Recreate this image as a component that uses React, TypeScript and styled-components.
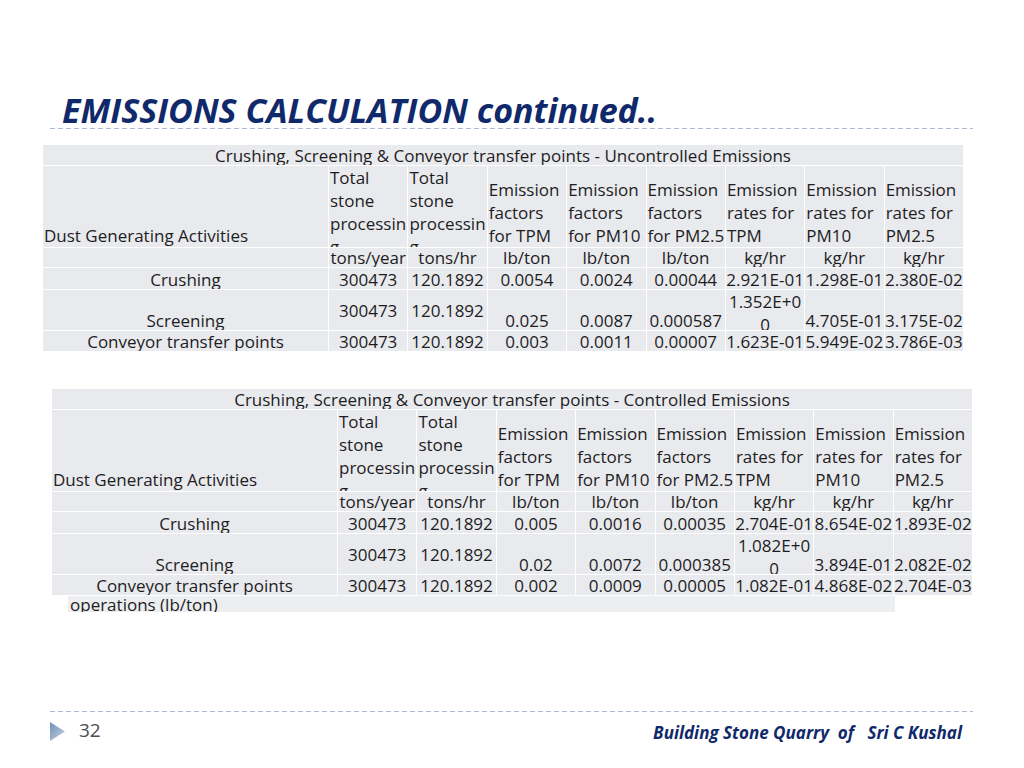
import React from "react";
import styled, { createGlobalStyle } from "styled-components";

const Global = createGlobalStyle`
  html, body { margin: 0; padding: 0; background: #ffffff; }
  body { font-family: "Open Sans", "Noto Sans", sans-serif; }
`;

const Slide = styled.div`
  width: 1024px;
  height: 768px;
  display: flex;
  flex-direction: column;
  overflow: hidden;
  background: #ffffff;
`;

const TitleBar = styled.header`
  margin: 0 51px 0 50px;
  padding: 92px 0 0 12px;
`;

const Title = styled.h1`
  margin: 0;
  font-family: "Open Sans", "Noto Sans", sans-serif;
  font-style: italic;
  font-weight: 700;
  font-size: 34px;
  line-height: 36px;
  color: #10296b;
  white-space: nowrap;
`;

const Rule = styled.div`
  height: 1px;
  background: repeating-linear-gradient(to right, #aebdd0 0 5px, transparent 5px 8px);
`;

const TitleRule = styled(Rule)`
  margin: 0 51px 0 50px;
`;

const Table = styled.div<{ $left: number; $top: number }>`
  display: grid;
  grid-template-columns: 285px repeat(8, 1fr);
  grid-template-rows: 20px 81px 19px 21px 40px 20px;
  gap: 1px;
  width: 920px;
  margin: ${(p) => p.$top}px 0 0 ${(p) => p.$left}px;
  font-family: "Open Sans", "Noto Sans", sans-serif;
  font-size: 17px;
  color: #1d1d1f;
`;

type VAlign = "top" | "middle" | "bottom";

const justify: Record<VAlign, string> = {
  top: "flex-start",
  middle: "center",
  bottom: "flex-end",
};

const Cell = styled.div<{ $v?: VAlign; $align?: "left" | "center"; $span?: number }>`
  grid-column: span ${(p) => p.$span ?? 1};
  background: #e9eaed;
  overflow: hidden;
  display: flex;
  flex-direction: column;
  justify-content: ${(p) => justify[p.$v ?? "bottom"]};
  text-align: ${(p) => p.$align ?? "center"};
  padding-left: ${(p) => (p.$align === "left" ? 1 : 0)}px;
  line-height: 23px;
  overflow-wrap: anywhere;
`;

const CellText = styled.span<{ $drop?: number }>`
  display: block;
  margin-bottom: ${(p) => -(p.$drop ?? 0)}px;
`;

const NoteBar = styled.div`
  width: 825px;
  height: 16px;
  margin: 1px 0 0 68px;
  background: #eceef0;
  overflow: hidden;
  display: flex;
  flex-direction: column;
  justify-content: flex-end;
  padding-left: 2px;
  font-family: "Open Sans", "Noto Sans", sans-serif;
  font-size: 17px;
  line-height: 23px;
  color: #1d1d1f;
`;

const Footer = styled.footer`
  margin: auto 51px 0 50px;
  height: 57px;
  display: flex;
  flex-direction: column;
`;

const FooterRow = styled.div`
  display: flex;
  align-items: flex-start;
  padding: 8px 11px 0 0;
`;

const Marker = styled.svg`
  margin-top: 2px;
  flex: none;
`;

const PageNum = styled.span`
  margin-left: 13px;
  font-family: "Open Sans", "Noto Sans", sans-serif;
  font-size: 19px;
  line-height: 20px;
  color: #4d4d4d;
`;

const Credit = styled.span`
  margin: 3px 0 0 auto;
  font-family: "Open Sans", "Noto Sans", sans-serif;
  font-style: italic;
  font-weight: 700;
  font-size: 17px;
  line-height: 20px;
  color: #10296b;
  white-space: pre;
`;

type Row = { label: string; values: string[] };

const headers = [
  "Emission factors for TPM",
  "Emission factors for PM10",
  "Emission factors for PM2.5",
  "Emission rates for TPM",
  "Emission rates for PM10",
  "Emission rates for PM2.5",
];

const units = ["tons/year", "tons/hr", "lb/ton", "lb/ton", "lb/ton", "kg/hr", "kg/hr", "kg/hr"];

const EmissionTable: React.FC<{ title: string; rows: Row[]; left: number; top: number }> = ({
  title,
  rows,
  left,
  top,
}) => (
  <Table $left={left} $top={top}>
    <Cell $span={9}>
      <CellText $drop={2}>{title}</CellText>
    </Cell>
    <Cell $align="left">
      <CellText>Dust Generating Activities</CellText>
    </Cell>
    <Cell $align="left" $v="top">
      <CellText>Total stone processing</CellText>
    </Cell>
    <Cell $align="left" $v="top">
      <CellText>Total stone processing</CellText>
    </Cell>
    {headers.map((h) => (
      <Cell key={h} $align="left">
        <CellText>{h}</CellText>
      </Cell>
    ))}
    <Cell />
    {units.map((u, i) => (
      <Cell key={i}>
        <CellText $drop={2}>{u}</CellText>
      </Cell>
    ))}
    {rows.map((r) => {
      const tall = r.label === "Screening";
      return (
        <React.Fragment key={r.label}>
          <Cell>
            <CellText $drop={2}>{r.label}</CellText>
          </Cell>
          {r.values.map((v, i) => {
            const v2: VAlign = tall && i < 2 ? "middle" : tall && i === 5 ? "top" : "bottom";
            return (
              <Cell key={i} $v={v2}>
                <CellText $drop={v2 === "bottom" ? 2 : 0}>{v}</CellText>
              </Cell>
            );
          })}
        </React.Fragment>
      );
    })}
  </Table>
);

const uncontrolled: Row[] = [
  { label: "Crushing", values: ["300473", "120.1892", "0.0054", "0.0024", "0.00044", "2.921E-01", "1.298E-01", "2.380E-02"] },
  { label: "Screening", values: ["300473", "120.1892", "0.025", "0.0087", "0.000587", "1.352E+00", "4.705E-01", "3.175E-02"] },
  { label: "Conveyor transfer points", values: ["300473", "120.1892", "0.003", "0.0011", "0.00007", "1.623E-01", "5.949E-02", "3.786E-03"] },
];

const controlled: Row[] = [
  { label: "Crushing", values: ["300473", "120.1892", "0.005", "0.0016", "0.00035", "2.704E-01", "8.654E-02", "1.893E-02"] },
  { label: "Screening", values: ["300473", "120.1892", "0.02", "0.0072", "0.000385", "1.082E+00", "3.894E-01", "2.082E-02"] },
  { label: "Conveyor transfer points", values: ["300473", "120.1892", "0.002", "0.0009", "0.00005", "1.082E-01", "4.868E-02", "2.704E-03"] },
];

export default function App() {
  return (
    <>
      <Global />
      <Slide>
        <TitleBar>
          <Title>EMISSIONS CALCULATION continued..</Title>
        </TitleBar>
        <TitleRule />
        <EmissionTable
          title="Crushing, Screening & Conveyor transfer points - Uncontrolled Emissions"
          rows={uncontrolled}
          left={43}
          top={16}
        />
        <EmissionTable
          title="Crushing, Screening & Conveyor transfer points - Controlled Emissions"
          rows={controlled}
          left={52}
          top={38}
        />
        <NoteBar>
          <CellText $drop={4}>operations (lb/ton)</CellText>
        </NoteBar>
        <Footer>
          <Rule />
          <FooterRow>
            <Marker width="16" height="20" viewBox="0 0 16 20">
              <defs>
                <linearGradient id="mk" x1="0" y1="0" x2="1" y2="1">
                  <stop offset="0" stopColor="#6f90b8" />
                  <stop offset="1" stopColor="#c7d4e4" />
                </linearGradient>
              </defs>
              <polygon points="0,0 15,9.5 0,19" fill="url(#mk)" />
            </Marker>
            <PageNum>32</PageNum>
            <Credit>{"Building Stone Quarry  of   Sri C Kushal"}</Credit>
          </FooterRow>
        </Footer>
      </Slide>
    </>
  );
}
